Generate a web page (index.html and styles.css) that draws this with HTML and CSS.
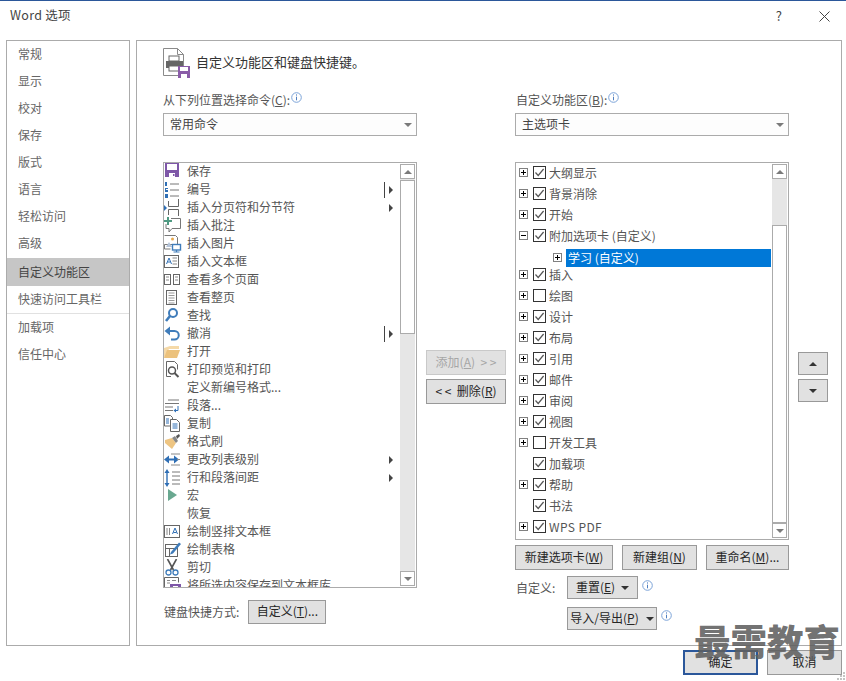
FILE: index.html
```html
<!DOCTYPE html>
<html lang="zh-CN">
<head>
<meta charset="utf-8">
<title>Word 选项</title>
<link rel="stylesheet" href="styles.css">
</head>
<body>
<svg class="defs" width="0" height="0" aria-hidden="true">
  <symbol id="chk" viewBox="1 1 11 11"><path d="M2.5 6.5 5.2 9.5 10.600 3" fill="none" stroke="#555" stroke-width="1.2"/></symbol>
  <symbol id="info" viewBox="0 0 11 11"><circle cx="5.5" cy="5.5" r="4.8" fill="#fff" stroke="#7ba3d8"/><path d="M5.5 2.4v1.2M5.5 4.7v3.6" stroke="#4f7fc0" stroke-width="1"/></symbol>
</svg>
<div class="dialog">
  <header class="titlebar">
    <span class="title">Word 选项</span>
    <span class="help">?</span>
    <svg class="close" width="11" height="11" viewBox="0 0 11 11"><path d="M.5.5l10 10M10.500.5l-10 10" stroke="#444" stroke-width="1"/></svg>
  </header>
  <div class="content">
    <nav class="sidebar">
      <div class="nav">常规</div>
      <div class="nav">显示</div>
      <div class="nav">校对</div>
      <div class="nav">保存</div>
      <div class="nav">版式</div>
      <div class="nav">语言</div>
      <div class="nav">轻松访问</div>
      <div class="nav">高级</div>
      <div class="nav-sep"></div>
      <div class="nav nav-active">自定义功能区</div>
      <div class="nav">快速访问工具栏</div>
      <div class="nav-sep sep-line"></div>
      <div class="nav">加载项</div>
      <div class="nav">信任中心</div>
    </nav>
    <main class="panel">
      <div class="panel-head">
        <svg width="28" height="31" viewBox="0 0 28 31">
          <path d="M.5.5h14l6 6v21H.5z" fill="#fff" stroke="#8a8a8a"/>
          <path d="M14.500.5v6h6" fill="none" stroke="#8a8a8a"/>
          <rect x="6" y="8" width="10" height="5" fill="#fff" stroke="#666"/>
          <rect x="3" y="13" width="17" height="7" fill="#666"/>
          <rect x="6" y="18" width="10" height="5" fill="#fff" stroke="#666"/>
          <rect x="15" y="18" width="12" height="12" fill="#8a5ca8"/>
          <rect x="17" y="19" width="8" height="4" fill="#fff"/>
          <rect x="18" y="26" width="6" height="4" fill="#fff"/>
        </svg>
        <span class="head-text">自定义功能区和键盘快捷键。</span>
      </div>
      <div class="columns">
        <section class="col col-left">
          <div class="label"><span>从下列位置选择命令(<u>C</u>):</span><svg class="info-inline" width="11" height="11"><use href="#info"/></svg></div>
          <div class="select"><span>常用命令</span><i class="select-arrow"></i></div>
          <div class="list list-left">
            <div class="rows">
              <div class="cmd"><svg class="ico" viewBox="0 0 18 18"><path d="M1 0h14v14H1z" fill="#7e57a8"/><path d="M3 1h10v6H3z" fill="#fff"/><path d="M5 10h6v4H5z" fill="#fff"/><path d="M9 11h1.500v2H9z" fill="#7e57a8"/></svg><span>保存</span></div>
              <div class="cmd"><svg class="ico" viewBox="0 0 18 18"><path d="M6 3h9M6 9h9M6 15h9" stroke="#777"/><path d="M1 1h2v4H1zM1 7h3v1H2v1h2v2H1zM1 13h3v4H1z" fill="#2f6fb5"/></svg><span>编号</span><i class="split"></i><i class="arrow"></i></div>
              <div class="cmd"><svg class="ico" viewBox="0 0 18 18"><path d="M4.500 2v5.500h10V0M4.500 16v-5.500h10V17" fill="none" stroke="#666"/><path d="M0 6l3 3-3 3z" fill="#2f6fb5"/></svg><span>插入分页符和分节符</span><i class="arrow arrow-solo"></i></div>
              <div class="cmd"><svg class="ico" viewBox="0 0 18 18"><path d="M7 1.500h9.500v10H8l-3 3.500v-3.500H2V7" fill="#fff" stroke="#777"/><path d="M3 0h2v3h3v2H5v3H3V5H0V3h3z" fill="#4f9a82"/></svg><span>插入批注</span></div>
              <div class="cmd"><svg class="ico" viewBox="0 0 18 18"><path d="M.5.500h11l2 2v7H.5V14h6" fill="#fff" stroke="#777"/><path d="M2 12l3-5 3 5z" fill="#b5c4d8"/><circle cx="8.500" cy="4" r="1.500" fill="#e8a94f"/><rect x="8.500" y="9.500" width="8" height="5.500" fill="#fff" stroke="#3f7cba" stroke-width="1.400"/><path d="M12.500 15v2M9.500 17h6" stroke="#3f7cba" stroke-width="1.200"/></svg><span>插入图片</span></div>
              <div class="cmd"><svg class="ico" viewBox="0 0 18 18"><rect x=".5" y="2.500" width="14" height="12" fill="#fff" stroke="#666"/><path d="M2.500 11l2.500-6 2.500 6M3.500 9h3" fill="none" stroke="#2f6fb5"/><path d="M8.500 5h4.500M8.500 8h4.500M8.500 11h4.500" stroke="#888"/></svg><span>插入文本框</span></div>
              <div class="cmd"><svg class="ico" viewBox="0 0 18 18"><rect x=".5" y="3.500" width="6" height="10" fill="#fff" stroke="#666"/><rect x="9.500" y="3.500" width="6" height="10" fill="#fff" stroke="#666"/><path d="M2 6h3M2 9h3M11 6h3M11 9h3" stroke="#888"/></svg><span>查看多个页面</span></div>
              <div class="cmd"><svg class="ico" viewBox="0 0 18 18"><rect x="2.500" y="1.500" width="10" height="14" fill="#fff" stroke="#666"/><path d="M4.500 4h6M4.500 6.500h6M4.500 9h6M4.500 11.500h6M4.500 14h6" stroke="#999"/></svg><span>查看整页</span></div>
              <div class="cmd"><svg class="ico" viewBox="0 0 18 18"><circle cx="9" cy="6" r="4" fill="#fff" stroke="#3f7cba" stroke-width="2"/><path d="M6 9l-4 5" stroke="#3f7cba" stroke-width="2.600"/></svg><span>查找</span></div>
              <div class="cmd"><svg class="ico" viewBox="0 0 18 18"><path d="M3 6h7.500a3.800 3.800 0 0 1 0 8.500H7" fill="none" stroke="#3f7cba" stroke-width="2"/><path d="M6 1.500v9L.5 6z" fill="#3f7cba"/></svg><span>撤消</span><i class="split"></i><i class="arrow"></i></div>
              <div class="cmd"><svg class="ico" viewBox="0 0 18 18"><path d="M0 5l6-2h9v3H5L0 15z" fill="#f5d9a8"/><path d="M0 15l3-8h13l-3 8z" fill="#ecc27d"/></svg><span>打开</span></div>
              <div class="cmd"><svg class="ico" viewBox="0 0 18 18"><path d="M7 15.500H2.500V.500h8l3 3v5" fill="#fff" stroke="#666"/><circle cx="8" cy="9.500" r="3.500" fill="#fff" stroke="#555" stroke-width="1.500"/><path d="M10.500 12l4 4" stroke="#555" stroke-width="2"/></svg><span>打印预览和打印</span></div>
              <div class="cmd"><span class="ico ico-blank"></span><span>定义新编号格式...</span></div>
              <div class="cmd"><svg class="ico" viewBox="0 0 18 18"><path d="M4 3h11M1 6.500h14M1 10h8M1 13.500h8" stroke="#777"/><path d="M14 9v4.500h-3" fill="none" stroke="#2f6fb5"/><path d="M12 11.500v4l-2.500-2z" fill="#2f6fb5"/></svg><span>段落...</span></div>
              <div class="cmd"><svg class="ico" viewBox="0 0 18 18"><path d="M.5.500h6l2 2V11H.5z" fill="#fff" stroke="#666"/><path d="M6.500 4.500h6l3 3v9h-9z" fill="#fff" stroke="#666"/><path d="M2 4h3M2 6h3M2 8h3" stroke="#2f6fb5"/><path d="M8.500 9h5M8.500 11h5M8.500 13h5" stroke="#2f6fb5"/></svg><span>复制</span></div>
              <div class="cmd"><svg class="ico" viewBox="0 0 18 18"><path d="M1 7l7-2 4 5-4 6-7-6z" fill="#eec582"/><path d="M8 5l3-2 3 5-2 2z" fill="#888"/><path d="M12 3l3-2 1 2-3 3z" fill="#555"/></svg><span>格式刷</span></div>
              <div class="cmd"><svg class="ico" viewBox="0 0 18 18"><path d="M3 8.500h9" stroke="#2f6fb5" stroke-width="2"/><path d="M5 4.500v8L0 8.500zM10 4.500v8l5-4z" fill="#2f6fb5"/><path d="M7 3h9M13 8.500h3M7 14h9" stroke="#888"/></svg><span>更改列表级别</span><i class="arrow arrow-solo"></i></div>
              <div class="cmd"><svg class="ico" viewBox="0 0 18 18"><path d="M3 4v10" stroke="#2f6fb5" stroke-width="1.400"/><path d="M3 0l2.500 4h-5zM3 18l2.500-4h-5z" fill="#2f6fb5"/><path d="M8 3h8M8 7h8M8 11h8M8 15h8" stroke="#777"/></svg><span>行和段落间距</span><i class="arrow arrow-solo"></i></div>
              <div class="cmd"><svg class="ico" viewBox="0 0 18 18"><path d="M4 2l9 6-9 6z" fill="#69a890"/></svg><span>宏</span></div>
              <div class="cmd"><span class="ico ico-blank"></span><span>恢复</span></div>
              <div class="cmd"><svg class="ico" viewBox="0 0 18 18"><rect x=".5" y="2.500" width="15" height="12" fill="#fff" stroke="#666"/><path d="M3 5v7M5.500 5v7" stroke="#888"/><path d="M8.500 11l2.500-6 2.500 6M9.500 9.500h3" fill="none" stroke="#2f6fb5"/></svg><span>绘制竖排文本框</span></div>
              <div class="cmd"><svg class="ico" viewBox="0 0 18 18"><rect x="1.500" y="3.500" width="12" height="12" fill="#fff" stroke="#666"/><path d="M1.500 7.500h12M5.500 7.500v8" stroke="#666"/><path d="M7 11L15 1.500l2 1.500-8 9.500-3 1z" fill="#3f7cba"/></svg><span>绘制表格</span></div>
              <div class="cmd"><svg class="ico" viewBox="0 0 18 18"><path d="M3.500 0l6 11M12.500 0l-6 11" stroke="#555" stroke-width="1.600"/><circle cx="4.500" cy="13.500" r="2.500" fill="#fff" stroke="#3f7cba" stroke-width="1.300"/><circle cx="11.500" cy="13.500" r="2.500" fill="#fff" stroke="#3f7cba" stroke-width="1.300"/></svg><span>剪切</span></div>
              <div class="cmd"><svg class="ico" viewBox="0 0 18 18"><path d="M.5 12V.500h14v5" fill="#fff" stroke="#666"/><path d="M3 3.500h3M8 3.500h4M3 6h3" stroke="#888"/><rect x="6" y="7" width="11" height="8" fill="#7e57a8"/><rect x="9" y="9" width="5" height="3" fill="#fff"/></svg><span>将所选内容保存到文本框库</span></div>
            </div>
            <div class="scroll">
              <div class="sb-btn"><i class="sb-up"></i></div>
              <div class="sb-thumb thumb-left"></div>
              <div class="sb-track"></div>
              <div class="sb-btn"><i class="sb-down"></i></div>
            </div>
          </div>
          <div class="kbd-row">
            <span class="label-inline">键盘快捷方式:</span>
            <button class="btn btn-custom"><span>自定义(<u>T</u>)...</span></button>
          </div>
        </section>

        <section class="col col-mid">
          <button class="btn btn-add" disabled><span>添加(<u>A</u>)&nbsp;&nbsp;&gt; &gt;</span></button>
          <button class="btn btn-del"><span>&lt; &lt;&nbsp;&nbsp;删除(<u>R</u>)</span></button>
        </section>

        <section class="col col-right">
          <div class="label label-r"><span>自定义功能区(<u>B</u>):</span><svg class="info-inline" width="11" height="11"><use href="#info"/></svg></div>
          <div class="select"><span>主选项卡</span><i class="select-arrow"></i></div>
          <div class="list list-right">
            <div class="rows rows-right">
              <div class="tree"><i class="exp"></i><svg class="chk" width="13" height="13"><use href="#chk"/></svg><span>大纲显示</span></div>
              <div class="tree"><i class="exp"></i><svg class="chk" width="13" height="13"><use href="#chk"/></svg><span>背景消除</span></div>
              <div class="tree"><i class="exp"></i><svg class="chk" width="13" height="13"><use href="#chk"/></svg><span>开始</span></div>
              <div class="tree"><i class="exp exp-open"></i><svg class="chk" width="13" height="13"><use href="#chk"/></svg><span>附加选项卡 (自定义)</span></div>
              <div class="tree-sub"><i class="exp"></i><span class="sel">学习 (自定义)</span></div>
              <div class="tree"><i class="exp"></i><svg class="chk" width="13" height="13"><use href="#chk"/></svg><span>插入</span></div>
              <div class="tree"><i class="exp"></i><svg class="chk" width="13" height="13"></svg><span>绘图</span></div>
              <div class="tree"><i class="exp"></i><svg class="chk" width="13" height="13"><use href="#chk"/></svg><span>设计</span></div>
              <div class="tree"><i class="exp"></i><svg class="chk" width="13" height="13"><use href="#chk"/></svg><span>布局</span></div>
              <div class="tree"><i class="exp"></i><svg class="chk" width="13" height="13"><use href="#chk"/></svg><span>引用</span></div>
              <div class="tree"><i class="exp"></i><svg class="chk" width="13" height="13"><use href="#chk"/></svg><span>邮件</span></div>
              <div class="tree"><i class="exp"></i><svg class="chk" width="13" height="13"><use href="#chk"/></svg><span>审阅</span></div>
              <div class="tree"><i class="exp"></i><svg class="chk" width="13" height="13"><use href="#chk"/></svg><span>视图</span></div>
              <div class="tree"><i class="exp"></i><svg class="chk" width="13" height="13"></svg><span>开发工具</span></div>
              <div class="tree"><i class="exp exp-none"></i><svg class="chk" width="13" height="13"><use href="#chk"/></svg><span>加载项</span></div>
              <div class="tree"><i class="exp"></i><svg class="chk" width="13" height="13"><use href="#chk"/></svg><span>帮助</span></div>
              <div class="tree"><i class="exp exp-none"></i><svg class="chk" width="13" height="13"><use href="#chk"/></svg><span>书法</span></div>
              <div class="tree"><i class="exp"></i><svg class="chk" width="13" height="13"><use href="#chk"/></svg><span class="wps">WPS PDF</span></div>
            </div>
            <div class="scroll">
              <div class="sb-btn"><i class="sb-up"></i></div>
              <div class="sb-track track-top"></div>
              <div class="sb-thumb thumb-right"></div>
              <div class="sb-btn"><i class="sb-down"></i></div>
            </div>
          </div>
          <div class="btn-row">
            <button class="btn btn-newtab"><span>新建选项卡(<u>W</u>)</span></button>
            <button class="btn btn-newgrp"><span>新建组(<u>N</u>)</span></button>
            <button class="btn btn-rename"><span>重命名(<u>M</u>)...</span></button>
          </div>
          <div class="custom-row">
            <span class="label-inline custom-label">自定义:</span>
            <button class="btn btn-reset"><span>重置(<u>E</u>)</span><i class="btn-caret"></i></button>
            <svg class="info-btn" width="11" height="11"><use href="#info"/></svg>
          </div>
          <div class="import-row">
            <button class="btn btn-import"><span>导入/导出(<u>P</u>)</span><i class="btn-caret"></i></button>
            <svg class="info-btn" width="11" height="11"><use href="#info"/></svg>
          </div>
        </section>

        <section class="col col-updown">
          <button class="btn btn-move" aria-label="上移"><i class="tri-up"></i></button>
          <button class="btn btn-move" aria-label="下移"><i class="tri-down"></i></button>
        </section>
      </div>
    </main>
  </div>
  <footer class="footer">
    <button class="btn btn-foot btn-ok"><span>确定</span></button>
    <button class="btn btn-foot"><span>取消</span></button>
  </footer>
  <div class="watermark">最需教育</div>
  <svg class="grip" width="10" height="10" viewBox="0 0 10 10"><path d="M7 1h2v2H7zM4 4h2v2H4zM7 4h2v2H7zM1 7h2v2H1zM4 7h2v2H4zM7 7h2v2H7z" fill="#c4c4c4"/></svg>
</div>
</body>
</html>
```
FILE: styles.css
```css
* { box-sizing: border-box; }
html, body { margin: 0; padding: 0; background: #fff; }
body { font: 12px/16px "Noto Sans CJK SC", "Noto Sans", sans-serif; color: #444; overflow: hidden; }
.defs { position: absolute; }
u { text-underline-offset: 1px; }
i { display: block; font-style: normal; }

.dialog { position: relative; width: 846px; height: 681px; display: flex; flex-direction: column; border-top: 1px solid #2b579a; overflow: hidden; }

.titlebar { height: 39px; flex: none; display: flex; align-items: flex-start; padding: 5px 16px 0 10px; }
.title { font-size: 12.5px; line-height: 18px; letter-spacing: .3px; color: #444; flex: 1; }
.help { font-size: 13px; line-height: 20px; color: #444; margin-right: 37px; }
.close { margin-top: 5px; }

.content { height: 606px; flex: none; display: flex; gap: 6px; padding: 0 4px 0 6px; }

.sidebar { width: 124px; flex: none; border: 1px solid #ababab; }
.nav { height: 27px; line-height: 25px; padding-left: 11px; color: #666; }
.nav-active { height: 28px; line-height: 28px; background: #c6c6c6; color: #444; }
.nav-sep { height: 1px; }
.sep-line { height: 2px; border-top: 1px solid #e1e1e1; margin-bottom: -1px; }

.panel { flex: 1; border: 1px solid #ababab; padding: 7px 0 0 26px; }
.panel-head { height: 30px; display: flex; gap: 5px; }
.head-text { font-size: 13px; line-height: 28px; color: #333; }

.columns { display: flex; margin-top: 14px; }
.col { flex: none; }
.col-left { width: 254px; margin-right: 9px; }
.col-mid { width: 80px; margin-right: 9px; padding-top: 258px; }
.col-right { width: 274px; margin-right: 9px; }
.col-updown { width: 30px; padding-top: 260px; }

.label { height: 16px; display: flex; align-items: flex-start; color: #555; }
.label-r { padding-left: 1px; }
.info-inline { margin-left: 1px; margin-top: 0; }
.select { height: 23px; margin-top: 5px; border: 1px solid #ababab; background: #fdfdfd; display: flex; align-items: center; justify-content: space-between; padding: 0 4px 2px 6px; color: #444; }
.select-arrow { width: 0; height: 0; margin-top: 2px; border-left: 4px solid transparent; border-right: 4px solid transparent; border-top: 4px solid #7a7a7a; }

.list { display: flex; margin-top: 26px; border: 1px solid #ababab; background: #fff; overflow: hidden; }
.list-left { height: 426px; }
.list-right { height: 378px; }
.rows { flex: 1; min-width: 0; overflow: hidden; }

.cmd { height: 18px; line-height: 16px; display: flex; padding-left: 0; color: #555; white-space: nowrap; }
.ico { width: 18px; height: 18px; flex: none; margin-right: 5px; }
.ico-blank { display: block; }
.split { width: 1px; height: 16px; background: #444; margin-left: auto; margin-top: 1px; margin-right: 4px; }
.arrow { width: 0; height: 0; border-top: 4px solid transparent; border-bottom: 4px solid transparent; border-left: 4px solid #444; margin-top: 5px; margin-right: 7px; }
.arrow-solo { margin-left: auto; }

.scroll { width: 15px; flex: none; display: flex; flex-direction: column; background: #e6e6e6; margin: 1px 1px 1px 0; }
.sb-btn { height: 15px; flex: none; border: 1px solid #ababab; background: #fff; display: flex; align-items: center; justify-content: center; }
.sb-up { width: 0; height: 0; border-left: 4px solid transparent; border-right: 4px solid transparent; border-bottom: 4px solid #7a7a7a; }
.sb-down { width: 0; height: 0; border-left: 4px solid transparent; border-right: 4px solid transparent; border-top: 4px solid #7a7a7a; }
.sb-thumb { background: #fff; border: 1px solid #ababab; }
.thumb-left { height: 154px; margin-top: 1px; }
.sb-track { flex: 1; }
.track-top { flex: none; height: 46px; }
.thumb-right { flex: 1; }

.rows-right { padding-left: 3px; }
.tree { height: 21px; display: flex; align-items: center; padding-bottom: 2px; color: #555; }
.exp { width: 9px; height: 9px; flex: none; border: 1px solid #808080; position: relative; background: #fff; }
.exp::before { content: ""; position: absolute; left: 1px; top: 3px; width: 5px; height: 1px; background: #000; }
.exp::after { content: ""; position: absolute; left: 3px; top: 1px; width: 1px; height: 5px; background: #000; }
.exp-open::after { display: none; }
.exp-none { visibility: hidden; }
.chk { flex: none; margin: 0 3px 0 5px; border: 1px solid #333; background: #fff; }
.tree-sub { height: 18px; margin: 2px 0 -2px 34px; display: flex; align-items: center; }
.tree-sub .exp { margin-top: -2px; margin-right: 4px; }
.sel { flex: 1; height: 18px; line-height: 18px; background: #0078d7; color: #fff; padding-left: 2px; margin-right: 1px; }
.wps { letter-spacing: .4px; }

.btn { font: inherit; color: #262626; background: #e1e1e1; border: 1px solid #999; padding: 0 0 2px; margin: 0; display: flex; align-items: center; justify-content: center; white-space: nowrap; }
.btn-add { width: 80px; height: 25px; background: #e1e1e1; border-color: #c9c9c9; color: #a6a6a6; }
.btn-del { width: 80px; height: 25px; margin-top: 4px; }
.btn-move { width: 30px; height: 23px; margin-bottom: 4px; padding: 0; }
.tri-up { width: 0; height: 0; border-left: 4px solid transparent; border-right: 4px solid transparent; border-bottom: 4px solid #333; }
.tri-down { width: 0; height: 0; border-left: 4px solid transparent; border-right: 4px solid transparent; border-top: 4px solid #333; }

.kbd-row { display: flex; align-items: center; margin-top: 12px; padding-left: 1px; }
.label-inline { color: #555; }
.btn-custom { width: 78px; height: 24px; margin-left: 9px; }

.btn-row { display: flex; margin-top: 5px; }
.btn-newtab { width: 98px; height: 25px; margin-right: 9px; }
.btn-newgrp { width: 75px; height: 25px; margin-right: 9px; }
.btn-rename { width: 83px; height: 25px; }

.custom-row { display: flex; margin-top: 6px; }
.custom-label { width: 52px; padding-left: 1px; line-height: 23px; }
.btn-reset { width: 71px; height: 23px; gap: 6px; }
.info-btn { margin: 4px 0 0 4px; }
.import-row { display: flex; margin-top: 8px; padding-left: 52px; }
.btn-import { width: 90px; height: 23px; gap: 7px; }
.import-row .info-btn { margin-top: 3px; margin-left: 4px; }
.btn-caret { width: 0; height: 0; margin-top: 2px; border-left: 4px solid transparent; border-right: 4px solid transparent; border-top: 4px solid #333; }

.footer { display: flex; justify-content: flex-end; gap: 9px; padding: 4px 4px 0 0; }
.btn-foot { width: 75px; height: 25px; }
.btn-ok { border: 2px solid #2b579a; }

.watermark { position: absolute; left: 694px; top: 620px; font: 900 36.500px/40px "Noto Sans CJK SC", sans-serif; color: rgba(95,95,95,.88); white-space: nowrap; }
.grip { position: absolute; right: 0; bottom: 0; }
```
